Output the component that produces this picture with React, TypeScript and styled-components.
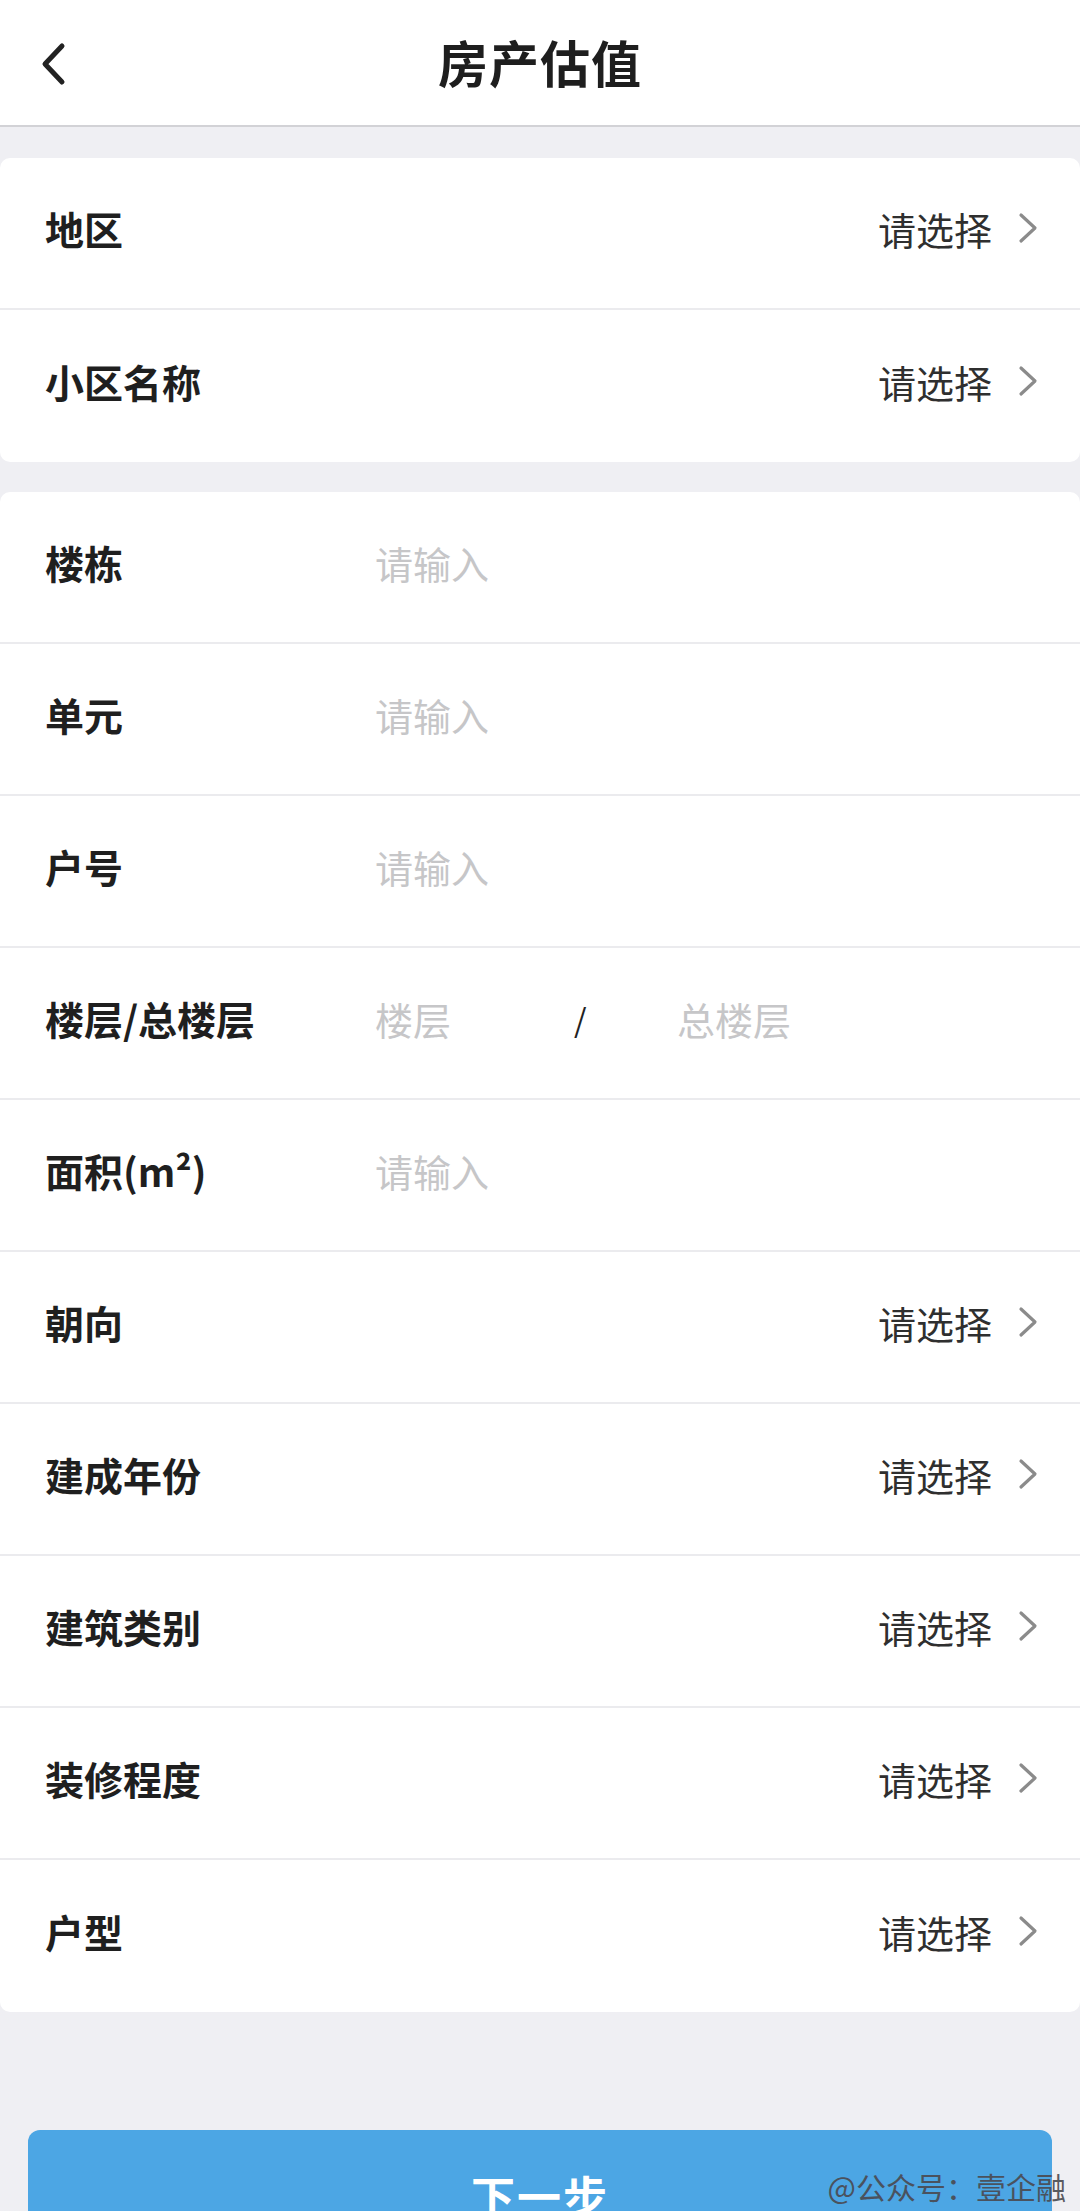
import React from 'react'
import styled, { createGlobalStyle } from 'styled-components'

const GlobalStyle = createGlobalStyle`
  html, body {
    margin: 0;
    padding: 0;
    background: #efeff3;
    font-family: 'Noto Sans CJK SC', 'Noto Sans', sans-serif;
    -webkit-font-smoothing: antialiased;
  }
  #root {
    height: 2211px;
    overflow: hidden;
  }
`

interface Field {
  label: string
  kind: 'select' | 'input' | 'floor'
}

const topFields: Field[] = [
  { label: '地区', kind: 'select' },
  { label: '小区名称', kind: 'select' },
]

const detailFields: Field[] = [
  { label: '楼栋', kind: 'input' },
  { label: '单元', kind: 'input' },
  { label: '户号', kind: 'input' },
  { label: '楼层/总楼层', kind: 'floor' },
  { label: '面积(m²)', kind: 'input' },
  { label: '朝向', kind: 'select' },
  { label: '建成年份', kind: 'select' },
  { label: '建筑类别', kind: 'select' },
  { label: '装修程度', kind: 'select' },
  { label: '户型', kind: 'select' },
]

const Page = styled.div`
  position: relative;
  min-height: 2211px;
  background: #efeff3;
`

const Header = styled.header`
  height: 127px;
  box-sizing: border-box;
  padding-bottom: 4px;
  background: #fff;
  border-bottom: 2px solid #d2d2d6;
  display: grid;
  grid-template-columns: 120px 1fr 120px;
  align-items: center;
`

const BackButton = styled.button`
  background: transparent;
  border: 0;
  padding: 6px 0 0 40px;
  height: 100%;
  display: flex;
  align-items: center;
  cursor: pointer;
`

const Title = styled.h1`
  margin: 0;
  text-align: center;
  font-size: 50px;
  font-weight: 700;
  color: #1e1e1e;
  letter-spacing: 1px;
`

const Content = styled.main`
  padding-top: 31px;
  display: flex;
  flex-direction: column;
  gap: 30px;
`

const Card = styled.section`
  background: #fff;
  border-radius: 10px;
  overflow: hidden;
`

const Row = styled.div`
  height: 152px;
  box-sizing: border-box;
  display: flex;
  align-items: center;
  padding: 0 42px 10px 45px;
  border-bottom: 2px solid #ebebee;
  &:last-child {
    border-bottom: 0;
  }
`

const Label = styled.div`
  width: 330px;
  flex-shrink: 0;
  font-size: 39px;
  font-weight: 700;
  color: #1f1f1f;
`

const Value = styled.div`
  flex: 1;
  display: flex;
  align-items: center;
  justify-content: flex-end;
  gap: 26px;
  font-size: 38px;
  color: #2f2f2f;
`

const Placeholder = styled.div<{ width?: number }>`
  font-size: 38px;
  color: #c6c6c8;
  width: ${({ width }) => (width ? `${width}px` : 'auto')};
`

const Slash = styled.div`
  width: 103px;
  font-size: 32px;
  color: #222;
`

const Footer = styled.div`
  padding: 118px 28px 0;
`

const NextButton = styled.button`
  width: 100%;
  height: 128px;
  border: 0;
  border-radius: 12px;
  background: #4ca6e4;
  color: #fff;
  font-family: inherit;
  font-size: 44px;
  font-weight: 700;
  letter-spacing: 2px;
  padding-top: 2px;
  cursor: pointer;
`

const Watermark = styled.div`
  position: absolute;
  right: 14px;
  top: 2164px;
  font-size: 30px;
  color: #4a4a50;
  opacity: 0.9;
  pointer-events: none;
`

const BackIcon = () => (
  <svg width="28" height="44" viewBox="0 0 28 44" fill="none">
    <path d="M22 4 L5 22 L22 40" stroke="#222" strokeWidth="5" strokeLinecap="round" strokeLinejoin="round" />
  </svg>
)

const Chevron = () => (
  <svg width="20" height="32" viewBox="0 0 20 32" fill="none">
    <path d="M3 3 L17 16 L3 29" stroke="#8b8b8b" strokeWidth="3.2" strokeLinecap="round" strokeLinejoin="round" />
  </svg>
)

const FieldRow: React.FC<{ field: Field }> = ({ field }) => (
  <Row>
    <Label>{field.label}</Label>
    {field.kind === 'select' && (
      <Value>
        请选择
        <Chevron />
      </Value>
    )}
    {field.kind === 'input' && <Placeholder>请输入</Placeholder>}
    {field.kind === 'floor' && (
      <>
        <Placeholder width={199}>楼层</Placeholder>
        <Slash>/</Slash>
        <Placeholder>总楼层</Placeholder>
      </>
    )}
  </Row>
)

const App: React.FC = () => (
  <Page>
    <GlobalStyle />
    <Header>
      <BackButton aria-label="返回">
        <BackIcon />
      </BackButton>
      <Title>房产估值</Title>
      <div />
    </Header>
    <Content>
      <Card>
        {topFields.map((f) => (
          <FieldRow key={f.label} field={f} />
        ))}
      </Card>
      <Card>
        {detailFields.map((f) => (
          <FieldRow key={f.label} field={f} />
        ))}
      </Card>
    </Content>
    <Footer>
      <NextButton>下一步</NextButton>
    </Footer>
    <Watermark>@公众号：壹企融</Watermark>
  </Page>
)

export default App
